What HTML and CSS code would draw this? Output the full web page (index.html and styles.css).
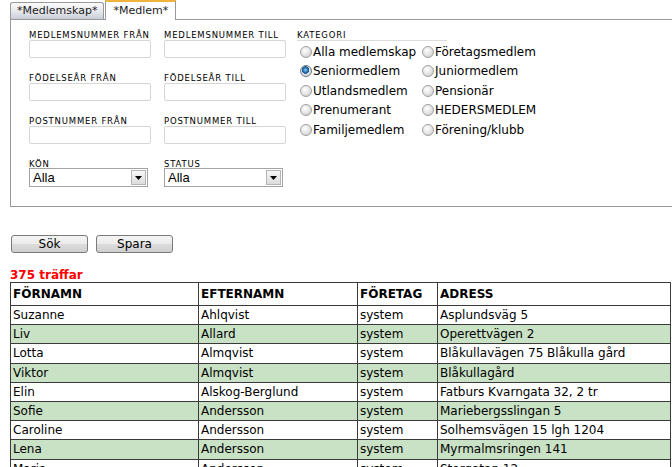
FILE: index.html
```html
<!DOCTYPE html>
<html lang="sv">
<head>
    <meta charset="UTF-8">
    <title>Medlemmar</title>
    <link rel="stylesheet" href="styles.css">
</head>
<body>
    <!-- Flikar -->
    <div class="tabs">
        <span class="tab">*Medlemskap*</span>
        <span class="tab active">*Medlem*</span>
    </div>

    <!-- Sökformulär -->
    <div class="panel">
        <div class="fields">
            <div class="field">
                <label>MEDLEMSNUMMER FRÅN</label>
                <input type="text">
            </div>
            <div class="field">
                <label>MEDLEMSNUMMER TILL</label>
                <input type="text">
            </div>
            <div class="field">
                <label>FÖDELSEÅR FRÅN</label>
                <input type="text">
            </div>
            <div class="field">
                <label>FÖDELSEÅR TILL</label>
                <input type="text">
            </div>
            <div class="field">
                <label>POSTNUMMER FRÅN</label>
                <input type="text">
            </div>
            <div class="field">
                <label>POSTNUMMER TILL</label>
                <input type="text">
            </div>
            <div class="field">
                <label>KÖN</label>
                <div class="select">
                    <select><option>Alla</option><option>Man</option><option>Kvinna</option></select>
                    <span class="select-arrow"><svg width="7" height="4" viewBox="0 0 7 4"><path d="M0 0h7L3.5 4z" fill="#000"/></svg></span>
                </div>
            </div>
            <div class="field">
                <label>STATUS</label>
                <div class="select">
                    <select><option>Alla</option><option>Aktiv</option><option>Vilande</option></select>
                    <span class="select-arrow"><svg width="7" height="4" viewBox="0 0 7 4"><path d="M0 0h7L3.5 4z" fill="#000"/></svg></span>
                </div>
            </div>
        </div>

        <div class="category">
            <div class="category-title">KATEGORI</div>
            <div class="radios">
                <label class="radio"><input type="radio" name="kat">Alla medlemskap</label>
                <label class="radio"><input type="radio" name="kat">Företagsmedlem</label>
                <label class="radio"><input type="radio" name="kat" checked>Seniormedlem</label>
                <label class="radio"><input type="radio" name="kat">Juniormedlem</label>
                <label class="radio"><input type="radio" name="kat">Utlandsmedlem</label>
                <label class="radio"><input type="radio" name="kat">Pensionär</label>
                <label class="radio"><input type="radio" name="kat">Prenumerant</label>
                <label class="radio"><input type="radio" name="kat">HEDERSMEDLEM</label>
                <label class="radio"><input type="radio" name="kat">Familjemedlem</label>
                <label class="radio"><input type="radio" name="kat">Förening/klubb</label>
            </div>
        </div>
    </div>

    <!-- Knappar -->
    <div class="actions">
        <button>Sök</button>
        <button>Spara</button>
    </div>

    <div class="hits">375 träffar</div>

    <!-- Resultat -->
    <table class="result">
        <colgroup>
            <col class="c1"><col class="c2"><col class="c3"><col class="c4">
        </colgroup>
        <thead>
            <tr><th>FÖRNAMN</th><th>EFTERNAMN</th><th>FÖRETAG</th><th>ADRESS</th></tr>
        </thead>
        <tbody>
            <tr><td>Suzanne</td><td>Ahlqvist</td><td>system</td><td>Asplundsväg 5</td></tr>
            <tr><td>Liv</td><td>Allard</td><td>system</td><td>Operettvägen 2</td></tr>
            <tr><td>Lotta</td><td>Almqvist</td><td>system</td><td>Blåkullavägen 75 Blåkulla gård</td></tr>
            <tr><td>Viktor</td><td>Almqvist</td><td>system</td><td>Blåkullagård</td></tr>
            <tr><td>Elin</td><td>Alskog-Berglund</td><td>system</td><td>Fatburs Kvarngata 32, 2 tr</td></tr>
            <tr><td>Sofie</td><td>Andersson</td><td>system</td><td>Mariebergsslingan 5</td></tr>
            <tr><td>Caroline</td><td>Andersson</td><td>system</td><td>Solhemsvägen 15 lgh 1204</td></tr>
            <tr><td>Lena</td><td>Andersson</td><td>system</td><td>Myrmalmsringen 141</td></tr>
            <tr><td>Maria</td><td>Andersson</td><td>system</td><td>Storgatan 12</td></tr>
        </tbody>
    </table>
</body>
</html>
```

FILE: styles.css
```css
body {
    margin: 0;
    padding: 0;
    font-family: "DejaVu Sans", Verdana, sans-serif;
    font-size: 12px;
    color: #000;
    background-color: #fff;
}

/* Flikar */
.tabs {
    display: flex;
    align-items: flex-end;
    height: 19px;
    padding-left: 10px;
    position: relative;
    z-index: 1;
}
.tab {
    box-sizing: border-box;
    height: 17px;
    padding: 0 6px;
    font-size: 11px;
    line-height: 15px;
    color: #222;
    border: 1px solid #999;
    border-bottom: none;
    border-radius: 3px 3px 0 0;
    background: linear-gradient(#fbfbfb, #e6e7ec 55%, #c9ccd8);
}
.tab.active {
    height: 20px;
    margin-left: 1px;
    margin-bottom: -1px;
    padding: 0 7px;
    line-height: 17px;
    border-top: 2px solid #f0b43c;
    border-radius: 0;
    background: #fff;
}

/* Panel med sökfält */
.panel {
    display: flex;
    align-items: flex-start;
    gap: 11px;
    margin-left: 10px;
    padding: 10px 0 19px 18px;
    border: 1px solid #999;
    border-right: none;
}
.fields {
    display: grid;
    grid-template-columns: 122px 122px;
    column-gap: 13px;
    row-gap: 15px;
}
.field label,
.category-title {
    display: block;
    font-size: 8.5px;
    line-height: 10px;
    letter-spacing: 0.8px;
    white-space: nowrap;
    color: #000;
}
.field input {
    box-sizing: border-box;
    display: block;
    width: 122px;
    height: 18px;
    margin: 0;
    border: 1px solid #d6d6d6;
    border-radius: 2px;
    background: #fff;
}

/* Rullgardinsmeny */
.select {
    position: relative;
    width: 119px;
    height: 19px;
    margin-top: -1px;
}
.select select {
    box-sizing: border-box;
    width: 100%;
    height: 100%;
    margin: 0;
    padding: 0 0 0 3px;
    appearance: none;
    -webkit-appearance: none;
    border: 1px solid #a3a3a3;
    border-radius: 0;
    background: #fff;
    font-family: "Liberation Sans", Arial, sans-serif;
    font-size: 13px;
    color: #000;
}
.select-arrow {
    position: absolute;
    top: 2px;
    right: 2px;
    box-sizing: border-box;
    width: 15px;
    height: 15px;
    display: flex;
    align-items: center;
    justify-content: center;
    border: 1px solid #b5b5b5;
    background: linear-gradient(#f7f7f7, #dcdcdc);
    pointer-events: none;
}

/* Kategori */
.category-title {
    width: 150px;
    border-bottom: 1px solid #dcdcdc;
}
.radios {
    display: grid;
    grid-template-columns: 122px auto;
    margin-top: 1px;
}
.radio {
    display: flex;
    align-items: center;
    height: 19.5px;
    font-size: 12px;
    white-space: nowrap;
}
.radio input {
    appearance: none;
    -webkit-appearance: none;
    box-sizing: border-box;
    width: 12px;
    height: 12px;
    margin: 0 1px 0 3px;
    border: 1px solid #a0a0a0;
    border-radius: 50%;
    background: radial-gradient(circle at 40% 35%, #fff, #e2e2e2 55%, #c4c4c4);
}
.radio input:checked {
    border-color: #6e7a86;
    background: radial-gradient(circle at 45% 40%, #9fd4f5 0, #2c7fc0 2px, #1b4f86 3.5px, #dfe3e8 4px, #c8cdd3);
}

/* Knappar */
.actions {
    display: flex;
    gap: 8px;
    margin: 28px 0 0 11px;
}
.actions button {
    box-sizing: border-box;
    width: 77px;
    height: 18px;
    padding: 0;
    border: 1px solid #7a7a7a;
    border-radius: 3px;
    background: linear-gradient(#f4f4f4, #ebebeb 50%, #dcdcdc 51%, #cfcfcf);
    font-family: "DejaVu Sans", Verdana, sans-serif;
    font-size: 12px;
    line-height: 15px;
    color: #000;
}

.hits {
    margin: 15px 0 0 10px;
    font-weight: bold;
    line-height: 14px;
    color: #f00;
}

/* Resultattabell */
.result {
    table-layout: fixed;
    width: 661px;
    margin-left: 10px;
    border-collapse: collapse;
}
.result .c1 { width: 188px; }
.result .c2 { width: 159px; }
.result .c3 { width: 80px; }
.result th,
.result td {
    border: 1px solid #3a3a3a;
    text-align: left;
    white-space: nowrap;
    overflow: hidden;
}
.result th {
    padding: 4px 2px;
    line-height: 14px;
    font-weight: bold;
}
.result td {
    padding: 2px 2px;
    line-height: 14.2px;
}
.result tbody tr:nth-child(even) td {
    background-color: #c9e1c5;
}
```
